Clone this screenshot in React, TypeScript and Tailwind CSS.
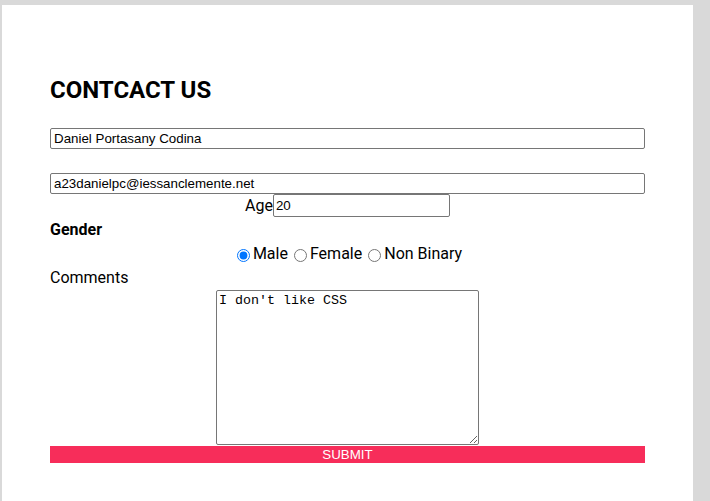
import { useState } from "react"

export default function App() {
  const [gender, setGender] = useState("male")

  return (
    <div className="min-h-screen bg-[#d9d9d9] pt-[5px] pl-[2px]">
      <div className="w-[691px] min-h-[496px] bg-white pl-[48px] pt-[71px] font-['Roboto',sans-serif] text-black">
        <form className="w-[595px]" onSubmit={(e) => e.preventDefault()}>
          <h1 className="text-[24px] font-bold leading-[28px]">CONTCACT US</h1>

          <input
            type="text"
            defaultValue="Daniel Portasany Codina"
            className="mt-[24px] block h-[21px] w-full rounded-[2px] border border-[#767676] px-[3px] font-['Liberation_Sans',Arial,sans-serif] text-[13.33px] text-black outline-none"
          />
          <input
            type="email"
            defaultValue="a23danielpc@iessanclemente.net"
            className="mt-[24px] block h-[21px] w-full rounded-[2px] border border-[#767676] px-[3px] font-['Liberation_Sans',Arial,sans-serif] text-[13.33px] text-black outline-none"
          />

          <div className="flex h-[23px] items-center justify-center">
            <label className="text-[16px] leading-[19px]">Age</label>
            <input
              type="text"
              defaultValue="20"
              className="h-[23px] w-[177px] rounded-[2px] border border-[#767676] px-[2px] font-['Liberation_Sans',Arial,sans-serif] text-[13.33px] text-black outline-none"
            />
          </div>

          <p className="mt-[3px] text-[16px] font-bold leading-[19px]">Gender</p>

          <div className="mt-[5px] flex h-[19px] items-center justify-center text-[16px] leading-[19px]">
            {[
              ["male", "Male"],
              ["female", "Female"],
              ["nb", "Non Binary"],
            ].map(([val, text]) => (
              <label key={val} className="flex items-center">
                <input
                  type="radio"
                  name="gender"
                  checked={gender === val}
                  onChange={() => setGender(val)}
                  className="mt-[3px] mr-[3px] ml-[5px] h-[13px] w-[13px]"
                />
                <span className="mr-[1px]">{text}</span>
              </label>
            ))}
          </div>

          <p className="mt-[5px] text-[16px] leading-[19px]">Comments</p>

          <div className="mt-[3px] flex justify-center">
            <textarea
              defaultValue="I don't like CSS"
              className="block h-[155px] w-[263px] rounded-[2px] border border-[#767676] p-[2px] font-['Liberation_Mono','Courier_New',monospace] text-[13.33px] leading-[15px] text-black outline-none"
            />
          </div>

          <button
            type="submit"
            className="mt-[1px] block h-[17px] w-full bg-[#f72d5a] font-['Liberation_Sans',Arial,sans-serif] text-[13.33px] leading-[17px] text-white"
          >
            SUBMIT
          </button>
        </form>
      </div>
    </div>
  )
}
